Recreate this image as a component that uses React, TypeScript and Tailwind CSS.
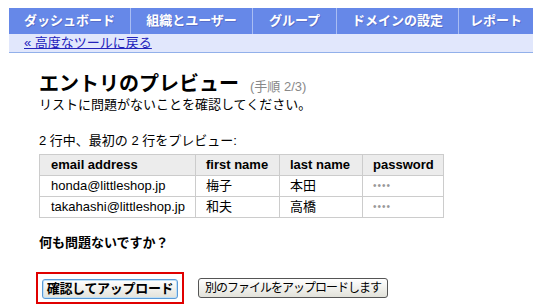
import React from "react";

const jp = { fontFamily: '"Liberation Sans", "Noto Sans CJK JP", sans-serif' };

export default function App() {
  const tabs = [
    { label: "ダッシュボード", w: "w-[121px]" },
    { label: "組織とユーザー", w: "w-[122px]" },
    { label: "グループ", w: "w-[84px]" },
    { label: "ドメインの設定", w: "w-[122px]" },
    { label: "レポート", w: "flex-1" },
  ];
  const rows = [
    ["honda@littleshop.jp", "梅子", "本田"],
    ["takahashi@littleshop.jp", "和夫", "高橋"],
  ];
  return (
    <div className="w-[533px] h-[305px] bg-white overflow-hidden text-black" style={jp}>
      <div className="pt-[8px] pl-[9px]">
        <div className="flex h-[26px] bg-[#6688e8]">
          {tabs.map((t, i) => (
            <div
              key={i}
              className={`${t.w} ${i > 0 ? "border-l border-[#a9bdf3]" : ""} flex items-center justify-center text-[13px] font-bold text-white [text-shadow:1px_1px_0_rgba(60,60,140,0.35)] whitespace-nowrap`}
            >
              {t.label}
            </div>
          ))}
        </div>
        <div className="h-[19px] bg-[#e1e7fc] border-b border-[#92b0ea] pl-[15px] flex items-center">
          <a href="#" className="text-[13px] leading-[16px] text-[#2222bb] underline">« 高度なツールに戻る</a>
        </div>
      </div>
      <div className="pl-[39px]">
        <div className="mt-[19px] flex items-baseline">
          <span className="text-[20px] leading-[24px] font-bold">エントリのプレビュー</span>
          <span className="ml-[11px] text-[13px] text-[#888888]">(手順 2/3)</span>
        </div>
        <div className="text-[13px] leading-[16px]">リストに問題がないことを確認してください。</div>
        <div className="mt-[20px] text-[13px] leading-[16px]">2 行中、最初の 2 行をプレビュー:</div>
        <table className="mt-[5px] border-collapse text-[13px] w-[405px]">
          <thead>
            <tr className="bg-[#ececec] h-[21px]">
              <th className="border border-[#cccccc] text-left font-bold pl-[11px] w-[156px] p-0">email address</th>
              <th className="border border-[#cccccc] text-left font-bold pl-[10px] w-[84px] p-0">first name</th>
              <th className="border border-[#cccccc] text-left font-bold pl-[10px] w-[83px] p-0">last name</th>
              <th className="border border-[#cccccc] text-left font-bold pl-[10px] p-0">password</th>
            </tr>
          </thead>
          <tbody>
            {rows.map((r, i) => (
              <tr key={i} className="h-[21px]">
                <td className="border border-[#cccccc] pl-[11px] p-0">{r[0]}</td>
                <td className="border border-[#cccccc] pl-[10px] p-0">{r[1]}</td>
                <td className="border border-[#cccccc] pl-[10px] p-0">{r[2]}</td>
                <td className="border border-[#cccccc] pl-[10px] p-0 text-[#999999] text-[10px] tracking-[1px]">••••</td>
              </tr>
            ))}
          </tbody>
        </table>
        <div className="mt-[17px] text-[13px] leading-[16px] font-bold">何も問題ないですか？</div>
        <div className="mt-[21px] flex items-center">
          <div className="-ml-[3px] border-2 border-[#e00000] px-[4px] py-[2px]">
            <button className="h-[20px] w-[136px] rounded-[3px] border border-[#5a9ad8] bg-gradient-to-b from-white to-[#e2e2da] text-[13px] font-bold leading-[16px] whitespace-nowrap tracking-[-0.3px] shadow-[inset_0_0_0_1px_#bde0f8]">
              確認してアップロード
            </button>
          </div>
          <button className="ml-[14px] h-[20px] w-[190px] rounded-[3px] border border-[#555555] bg-gradient-to-b from-white to-[#e2e2da] text-[12px] leading-[16px] whitespace-nowrap tracking-[-1px]">
            別のファイルをアップロードします
          </button>
        </div>
      </div>
    </div>
  );
}
